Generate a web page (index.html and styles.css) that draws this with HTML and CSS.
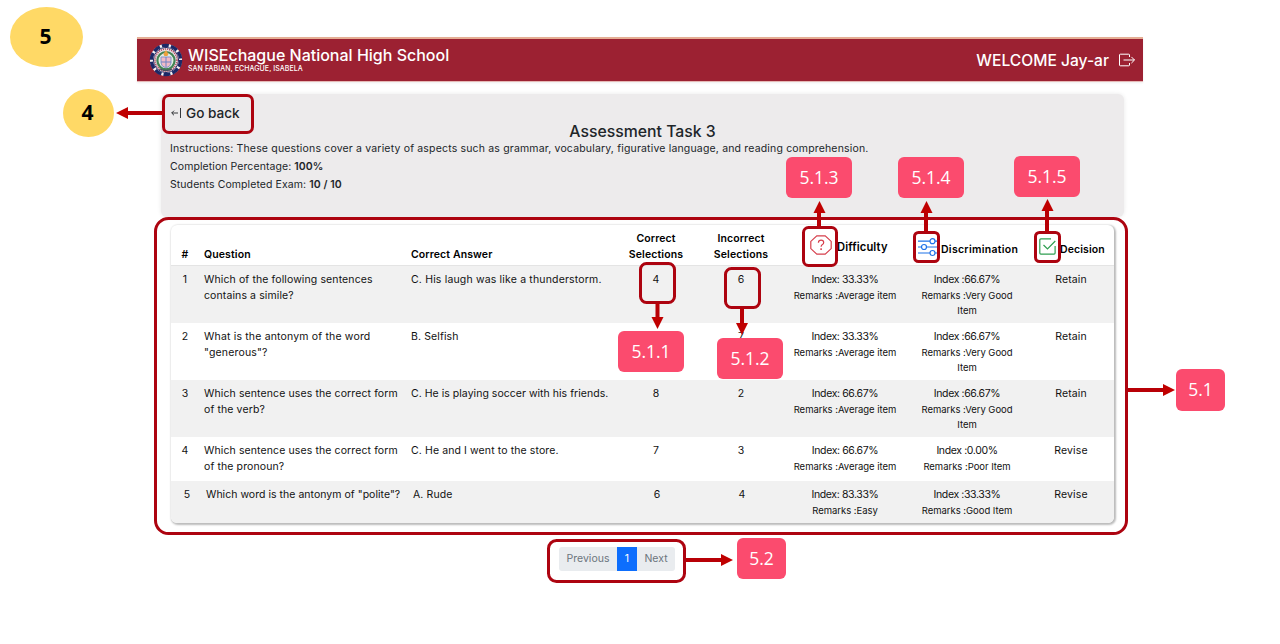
FILE: index.html
```html
<!DOCTYPE html>
<html lang="en">
<head>
<meta charset="utf-8">
<title>Assessment Task 3</title>
<link rel="stylesheet" href="styles.css">
</head>
<body>
<main class="page">
  <header class="topbar">
    <svg class="seal" viewBox="0 0 34 34">
      <circle cx="17" cy="17" r="16" fill="#f4f2f4"/>
      <circle cx="17" cy="17" r="14.6" fill="none" stroke="#1d2866" stroke-width="3.4" stroke-dasharray="7 2.17"/>
      <circle cx="17" cy="17" r="12.6" fill="#e9e3e8" stroke="#26306b" stroke-width="1"/>
      <circle cx="17" cy="17" r="11" fill="none" stroke="#b04a5f" stroke-width="1.6" stroke-dasharray="1.2 .9"/>
      <circle cx="17" cy="17.6" r="8.6" fill="#e3ede4" stroke="#428454" stroke-width="2.2"/>
      <path d="M12 14h10v6q0 3-5 5q-5-2-5-5z" fill="#f1bbc6" stroke="#8494ca" stroke-width="1"/>
      <path d="M12 19h10M17 14v10" stroke="#6c83c5" stroke-width="1"/>
      <path d="M17 7l2.4 4-1 2h-3l-1-2z" fill="#eba23b"/>
      <path d="M11 26q6 3 12 0" stroke="#48505f" stroke-width="1.3" fill="none"/>
    </svg>
    <div class="brand">
      <div class="brand-name">WISEchague National High School</div>
      <div class="brand-place">SAN FABIAN, ECHAGUE, ISABELA</div>
    </div>
    <div class="welcome">WELCOME Jay-ar</div>
    <svg class="exit" viewBox="0 0 16 16" fill="none" stroke="#fff" stroke-width="1">
      <path d="M10.5 5V3q0-.8-.8-.8H1.3q-.8 0-.8.8v10q0 .8.8.8h8.400q.8 0 .8-.8v-2M4.500 8h11M12.400 4.900L15.500 8l-3.100 3.100"/>
    </svg>
  </header>

  <section class="panel">
    <div class="back">
      <svg class="back-icon" viewBox="0 0 10 12" fill="none" stroke="#212529" stroke-width=".9"><path d="M7 6H.8M3 3.700L.7 6 3 8.300M9.500 1v10"/></svg>
      <span>Go back</span>
    </div>
    <h1 class="title">Assessment Task 3</h1>
    <p class="info intro">Instructions: These questions cover a variety of aspects such as grammar, vocabulary, figurative language, and reading comprehension.</p>
    <p class="info">Completion Percentage: <b>100%</b></p>
    <p class="info">Students Completed Exam: <b>10 / 10</b></p>
  </section>

  <section class="table">
    <div class="row head">
      <div class="c">#</div><div>Question</div><div>Correct Answer</div>
      <div class="c">Correct<br>Selections</div><div class="c">Incorrect<br>Selections</div>
      <div class="metric difficulty">
        <svg class="ic-help" viewBox="0 0 22 20" fill="none" stroke="#d63f4c" stroke-width="1.2"><path d="M6.800.8h8.400l6 5.600v7.200l-6 5.600H6.800l-6-5.600V6.400z"/><path d="M8.400 7.700q.1-2.600 2.700-2.600 2.600 0 2.600 2.300 0 1.300-1.300 2.100-1.300.9-1.300 2.200"/><path d="M11.100 13.300v1.700" stroke-width="1.5"/></svg>
        <span>Difficulty</span>
      </div>
      <div class="metric discrimination">
        <svg class="ic-sliders" viewBox="0 0 20 20" fill="none" stroke="#1f72e8" stroke-width="1.2"><path d="M0 4.200h12M17 4.200h3M0 10h3.500M8.500 10H20M0 16h12M17 16h3"/><circle cx="14.5" cy="4.2" r="2.5"/><circle cx="6" cy="10" r="2.5"/><circle cx="14.5" cy="16" r="2.5"/></svg>
        <span>Discrimination</span>
      </div>
      <div class="metric decision">
        <svg class="ic-check" viewBox="0 0 17 17" fill="none" stroke="#2f9e50" stroke-width="1.2"><path d="M12 .9H1.800q-1 0-1 1v13.200q0 1 1 1h13.300q1 0 1-1V8M4.500 7l4 4L16.300 3"/></svg>
        <span>Decision</span>
      </div>
    </div>
    <div class="row odd tall">
      <div class="c">1</div><div>Which of the following sentences<br>contains a simile?</div><div class="wide">C. His laugh was like a thunderstorm.</div>
      <div class="c">4</div><div class="c">6</div>
      <div class="c"><span class="index">Index: 33.33%</span><small>Remarks :Average item</small></div>
      <div class="c"><span class="index">Index :66.67%</span><small>Remarks :Very Good<br>Item</small></div><div class="c">Retain</div>
    </div>
    <div class="row tall">
      <div class="c">2</div><div class="wide">What is the antonym of the word<br>"generous"?</div><div>B. Selfish</div>
      <div class="c"></div><div class="c">7</div>
      <div class="c"><span class="index">Index: 33.33%</span><small>Remarks :Average item</small></div>
      <div class="c"><span class="index">Index :66.67%</span><small>Remarks :Very Good<br>Item</small></div><div class="c">Retain</div>
    </div>
    <div class="row odd tall">
      <div class="c">3</div><div>Which sentence uses the correct form<br>of the verb?</div><div class="snug">C. He is playing soccer with his friends.</div>
      <div class="c">8</div><div class="c">2</div>
      <div class="c"><span class="index">Index: 66.67%</span><small>Remarks :Average item</small></div>
      <div class="c"><span class="index">Index :66.67%</span><small>Remarks :Very Good<br>Item</small></div><div class="c">Retain</div>
    </div>
    <div class="row short">
      <div class="c">4</div><div>Which sentence uses the correct form<br>of the pronoun?</div><div>C. He and I went to the store.</div>
      <div class="c">7</div><div class="c">3</div>
      <div class="c"><span class="index">Index: 66.67%</span><small>Remarks :Average item</small></div>
      <div class="c"><span class="index">Index :0.00%</span><small>Remarks :Poor Item</small></div><div class="c">Revise</div>
    </div>
    <div class="row odd last">
      <div class="c">5</div><div class="snug">Which word is the antonym of "polite"?</div><div>A. Rude</div>
      <div class="c">6</div><div class="c">4</div>
      <div class="c"><span class="index">Index: 83.33%</span><small>Remarks :Easy</small></div>
      <div class="c"><span class="index">Index :33.33%</span><small>Remarks :Good Item</small></div><div class="c">Revise</div>
    </div>
  </section>

  <nav class="pager"><div class="prev">Previous</div><div class="on">1</div><div class="next">Next</div></nav>
</main>

<svg class="marks" viewBox="0 0 1280 644">
  <g fill="none" stroke="#ad0410" stroke-width="3">
    <rect x="163.500" y="95.500" width="89" height="37" rx="5.500"/>
    <rect x="155.500" y="218.500" width="971" height="315" rx="13"/>
    <rect x="803.500" y="227.500" width="33" height="38" rx="5"/>
    <rect x="914.500" y="232.500" width="24" height="29" rx="4"/>
    <rect x="1035.500" y="232.500" width="24" height="29" rx="4"/>
    <rect x="640.500" y="263.500" width="34" height="39" rx="6"/>
    <rect x="725.500" y="268.500" width="34" height="39" rx="6"/>
    <rect x="548.500" y="540.500" width="136" height="41" rx="8"/>
  </g>
  <g stroke="#b80006" stroke-width="4" fill="#c00000">
    <path d="M163 113H127M819 227V212M926 232V212M1047 232V210M657.500 303V318M742 308V325M1128 390H1165M686 560H723"/>
    <g stroke="none">
      <path d="M116 113l12-6v12z"/>
      <path d="M819.500 201l6 12h-12z"/>
      <path d="M926.500 201l6 12h-12z"/>
      <path d="M1047.500 199l6 12h-12z"/>
      <path d="M657.500 329l6-12h-12z"/>
      <path d="M742 335l6-12h-12z"/>
      <path d="M1175 390l-12-6v12z"/>
      <path d="M733 560l-12-6v12z"/>
    </g>
  </g>
</svg>
<div class="dot dot-5">5</div>
<div class="dot dot-4">4</div>
<div class="tag t513">5.1.3</div>
<div class="tag t514">5.1.4</div>
<div class="tag t515">5.1.5</div>
<div class="tag t511">5.1.1</div>
<div class="tag t512">5.1.2</div>
<div class="tag narrow t51">5.1</div>
<div class="tag narrow t52">5.2</div>
</body>
</html>
```
FILE: styles.css
```css
* { box-sizing: border-box; }
body { margin: 0; width: 1280px; height: 644px; overflow: hidden; position: relative; background: #fff; color: #212529; font-family: Inter, "Open Sans", sans-serif; }
.page { width: 1006px; margin-left: 137px; padding-top: 37px; }
.topbar { height: 45px; background: #9c2132; border-top: 2px solid #e5ae94; border-bottom: 1px solid #e6b9b6; display: flex; align-items: center; padding: 0 8px 0 12px; color: #fff; box-shadow: 0 1px 2px #eee; }
.seal { width: 34px; height: 34px; margin-right: 5px; }
.brand { flex: 1; white-space: nowrap; }
.brand-name { font-size: 16px; line-height: 18px; font-weight: 500; }
.brand-place { font-size: 7px; line-height: 10px; font-weight: 500; letter-spacing: .08px; }
.welcome { font-size: 15.600px; font-weight: 500; white-space: nowrap; }
.exit { width: 16px; height: 16px; margin-left: 10px; }
.panel { margin: 12px 19px 0 24px; height: 123px; padding: 9px 9px 0; background: #edebec; border-radius: 6px; box-shadow: 0 0 4px #e8e8e8; }
.back { height: 20px; display: flex; align-items: center; font-size: 13.600px; font-weight: 500; padding-left: 1px; }
.back-icon { width: 10px; height: 12px; margin-right: 5px; }
.title { margin: 0; font-size: 15.800px; line-height: 17px; font-weight: 500; text-align: center; }
.info { margin: 0; font-size: 10.500px; line-height: 18px; white-space: nowrap; letter-spacing: .08px; }
.intro { letter-spacing: .17px; }
.info b { font-weight: 600; }
.table { margin: 8px 29px 0 34px; width: 943px; height: 298px; background: #fff; border-radius: 6px; box-shadow: 1px 1px 2px 1px #bbb; overflow: hidden; font-size: 10.500px; line-height: 15.500px; letter-spacing: .11px; color: #111; }
.row { display: grid; grid-template-columns: 25px 207px 211px 84px 86px 122px 122px 86px; padding-top: 6px; white-space: nowrap; }
.row > div { padding-left: 8px; }
.row > .c { padding-left: 0; text-align: center; }
.row > .c:first-child { padding-left: 3px; }
.row > .snug { letter-spacing: .03px; }
.row > .wide { letter-spacing: .17px; }
.index { letter-spacing: -.38px; }
.row small { display: block; font-size: 9.500px; line-height: 15.500px; letter-spacing: -.03px; }
.row.head { height: 41px; padding: 0 0 3px; font-weight: 600; align-items: end; color: #000; border-bottom: 1px solid #e4e4e4; }
.odd { background: #f1f1f1; }
.tall { height: 57px; }
.short { height: 44px; }
.last { height: 42px; }
.last > div:nth-child(-n+3) { transform: translateX(2px); }
.last > div:nth-child(n+4):nth-child(-n+5) { transform: translateX(1px); }
.pager { display: flex; width: 116px; height: 24px; margin: 24px 0 0 422px; background: #e9ecef; border-radius: 3px; font-size: 10.500px; line-height: 24px; color: #6c757d; text-align: center; }
.prev { width: 58px; }
.next { flex: 1; }
.on { width: 20px; background: #0d6efd; color: #fff; }
.row > .metric { align-self: start; display: flex; align-items: flex-start; white-space: nowrap; }
.row > .difficulty { padding: 10px 0 0 26px; gap: 5px; font-size: 11.200px; }
.row > .discrimination { padding: 12px 0 0 12px; gap: 3px; letter-spacing: .28px; }
.row > .decision { padding: 13px 0 0 11px; gap: 4px; }
.difficulty span { margin-top: 5px; }
.discrimination span { margin-top: 5px; }
.decision span { margin-top: 4px; }
.ic-help { width: 22px; height: 20px; flex: none; }
.ic-sliders { width: 20px; height: 20px; flex: none; }
.ic-check { width: 17px; height: 17px; flex: none; }
.marks { position: absolute; left: 0; top: 0; width: 1280px; height: 644px; }
.dot, .tag { position: absolute; display: flex; align-items: center; justify-content: center; padding-bottom: 2px; }
.dot { background: #ffd966; border-radius: 50%; color: #000; font: 700 21px "Open Sans", sans-serif; padding-right: 2px; }
.dot-5 { left: 10px; top: 7px; width: 73px; height: 60px; }
.dot-4 { left: 63px; top: 89px; width: 51px; height: 48px; }
.tag { width: 66px; height: 41px; border-radius: 6px; background: #fb4b6e; color: #fff; font: 400 17.500px "Open Sans", sans-serif; }
.narrow { width: 49px; }
.t513 { left: 786px; top: 157px; }
.t514 { left: 898px; top: 157px; }
.t515 { left: 1014px; top: 156px; }
.t511 { left: 618px; top: 331px; }
.t512 { left: 717px; top: 338px; }
.t51 { left: 1176px; top: 369px; height: 42px; }
.t52 { left: 737px; top: 538px; }
```
